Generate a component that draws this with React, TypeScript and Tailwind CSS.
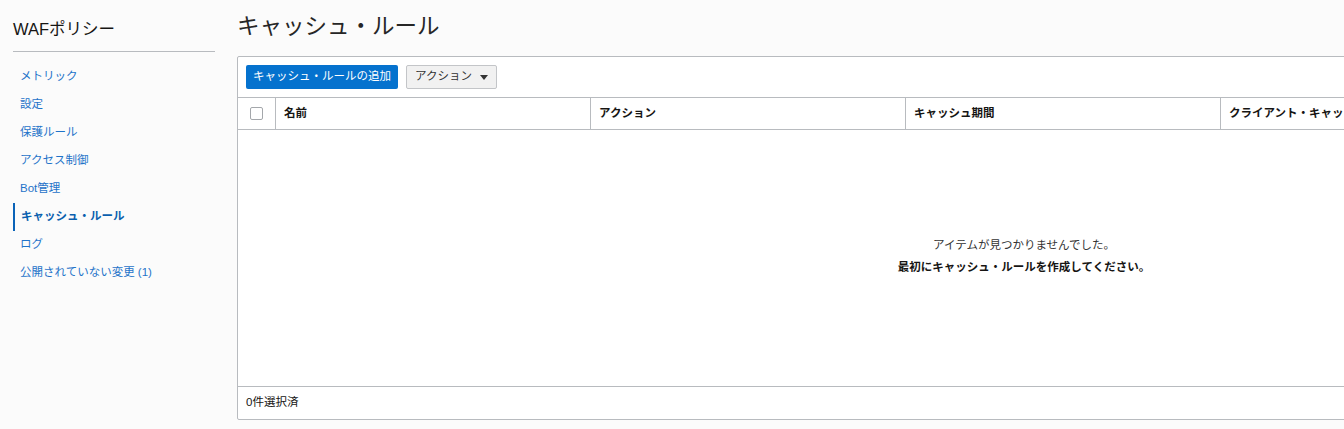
import React from 'react';

const navItems = [
  'メトリック',
  '設定',
  '保護ルール',
  'アクセス制御',
  'Bot管理',
  'キャッシュ・ルール',
  'ログ',
  '公開されていない変更 (1)',
];

const columns = ['名前', 'アクション', 'キャッシュ期間', 'クライアント・キャッシュ期間'];

export default function App() {
  const active = 'キャッシュ・ルール';

  return (
    <div
      className="w-[1344px] h-[429px] overflow-hidden bg-[#fbfbfb] text-[#161513] flex"
      style={{ fontFamily: '"Liberation Sans", "Noto Sans CJK JP", sans-serif' }}
    >
      {/* Sidebar */}
      <aside className="w-[202px] ml-[13px] shrink-0">
        <h2 className="text-[16.5px] leading-[24px] pt-[17px] pb-[10px] border-b border-[#b8bbbf] font-normal">
          WAFポリシー
        </h2>
        <nav className="pt-[11px]">
          {navItems.map(item => (
            <div
              key={item}
              className={
                item === active
                  ? 'h-[28px] flex items-center pl-[6px] border-l-2 border-[#0a63b8] text-[11.5px] font-bold text-[#0a5fae]'
                  : 'h-[28px] flex items-center pl-[7px] text-[11.5px] text-[#1f73c9]'
              }
            >
              {item}
            </div>
          ))}
        </nav>
      </aside>

      {/* Main */}
      <main className="ml-[22px] shrink-0">
        <h1 className="text-[22.5px] leading-[32px] pt-[11px] pb-[13px] font-normal text-[#262626]">
          キャッシュ・ルール
        </h1>

        <div className="w-[1570px] bg-white border border-[#b8bbbf] rounded-[2px]">
          {/* Toolbar */}
          <div className="flex items-center gap-[8px] px-[8px] h-[41px] border-b border-[#b8bbbf]">
            <button className="h-[24px] px-[7px] bg-[#0572ce] text-white text-[11.5px] rounded-[2px]">
              キャッシュ・ルールの追加
            </button>
            <button className="h-[24px] px-[8px] bg-[#f1f1f1] border border-[#c3c5c8] text-[#333] text-[11.5px] rounded-[2px] flex items-center gap-[8px]">
              アクション
              <svg width="8" height="5" viewBox="0 0 8 5">
                <path d="M0 0h8L4 5z" fill="#333" />
              </svg>
            </button>
          </div>

          {/* Header */}
          <div className="flex h-[32px] border-b border-[#b8bbbf] text-[11.5px] font-bold">
            <div className="w-[38px] flex items-center justify-center border-r border-[#b8bbbf]">
              <span className="w-[13px] h-[13px] border border-[#a4a7ab] rounded-[2px] bg-white" />
            </div>
            {columns.map((col, i) => (
              <div
                key={col}
                className={
                  i < columns.length - 1
                    ? 'w-[315px] flex items-center px-[8px] border-r border-[#b8bbbf]'
                    : 'flex-1 flex items-center px-[8px]'
                }
              >
                {col}
              </div>
            ))}
          </div>

          {/* Empty state */}
          <div className="h-[256px] flex flex-col items-center justify-center text-[11.5px] leading-[22px] pb-[5px] pl-[4px]">
            <p className="text-[#333]">アイテムが見つかりませんでした。</p>
            <p className="font-bold">最初にキャッシュ・ルールを作成してください。</p>
          </div>

          {/* Footer */}
          <div className="h-[33px] border-t border-[#b8bbbf] flex items-center px-[8px] text-[11.5px]">
            0件選択済
          </div>
        </div>
      </main>
    </div>
  );
}
